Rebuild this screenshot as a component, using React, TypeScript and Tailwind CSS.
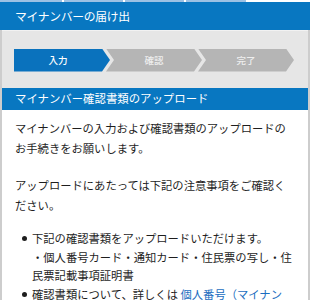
import React from "react";

const font = { fontFamily: '"Noto Sans CJK JP", "Noto Sans", sans-serif' };

function Step({
  label,
  active,
  first,
}: {
  label: string;
  active?: boolean;
  first?: boolean;
}) {
  return (
    <div
      className={
        "h-[23px] w-[96px] shrink-0 flex items-center justify-center text-[9.5px] font-medium " +
        (active ? "bg-[#0a72bd] text-white " : "bg-[#b5b5b5] text-[#eeeeee] ") +
        (first
          ? "pr-[8px] [clip-path:polygon(0_0,calc(100%-8px)_0,100%_50%,calc(100%-8px)_100%,0_100%)]"
          : "-ml-[4px] pl-[8px] pr-[8px] [clip-path:polygon(0_0,calc(100%-8px)_0,100%_50%,calc(100%-8px)_100%,0_100%,8px_50%)]")
      }
    >
      {label}
    </div>
  );
}

function Bullet() {
  return (
    <span className="w-[17px] shrink-0 flex justify-center pl-[2px]">
      <span className="mt-[7px] w-[5px] h-[5px] rounded-full bg-[#1e1e1e]" />
    </span>
  );
}

export default function App() {
  return (
    <div className="w-[310px] h-[300px] overflow-hidden bg-white" style={font}>
      {/* top tabs strip */}
      <div className="flex h-[2px] gap-[2px] bg-white">
        <div className="w-[62px] bg-[#9cc1e4]" />
        <div className="w-[59px] bg-[#9cc1e4]" />
        <div className="w-[59px] bg-[#9cc1e4]" />
        <div className="w-[60px] bg-[#9cc1e4]" />
      </div>
      {/* header */}
      <div className="h-[28px] bg-[#0877c1] flex items-center pl-[15px] text-white text-[11.8px] tracking-[-0.3px]">
        マイナンバーの届け出
      </div>
      <div className="border-x-2 border-[#cdcdcd]">
        {/* steps */}
        <div className="h-[58px] bg-[#e6e6e6] border-t border-[#f2f2f2] flex items-center pl-[12px] pt-[1px]">
          <Step label="入力" active first />
          <Step label="確認" />
          <Step label="完了" />
        </div>
        {/* section header */}
        <div className="h-[22px] bg-[#0877c1] flex items-center pl-[13px] text-white text-[11.4px]">
          マイナンバー確認書類のアップロード
        </div>
        {/* content */}
        <div className="bg-white pl-[13px] pt-[8px] text-[11.3px] text-[#1e1e1e] whitespace-nowrap">
          <div className="leading-[20px]">
            <div>マイナンバーの入力および確認書類のアップロードの</div>
            <div>お手続きをお願いします。</div>
          </div>
          <div className="leading-[20px] mt-[17px]">
            <div>アップロードにあたっては下記の注意事項をご確認く</div>
            <div>ださい。</div>
          </div>
          <ul className="mt-[14px] leading-[18.5px]">
            <li className="flex">
              <Bullet />
              <div>
                <div>下記の確認書類をアップロードいただけます。</div>
                <div>・個人番号カード・通知カード・住民票の写し・住</div>
                <div>民票記載事項証明書</div>
              </div>
            </li>
            <li className="flex">
              <Bullet />
              <div>
                <div>
                  確認書類について、詳しくは{" "}
                  <span className="text-[#1a6dc0]">個人番号（マイナン</span>
                </div>
                <div>
                  <span className="text-[#1a6dc0]">バー）</span>
                </div>
              </div>
            </li>
          </ul>
        </div>
      </div>
    </div>
  );
}
